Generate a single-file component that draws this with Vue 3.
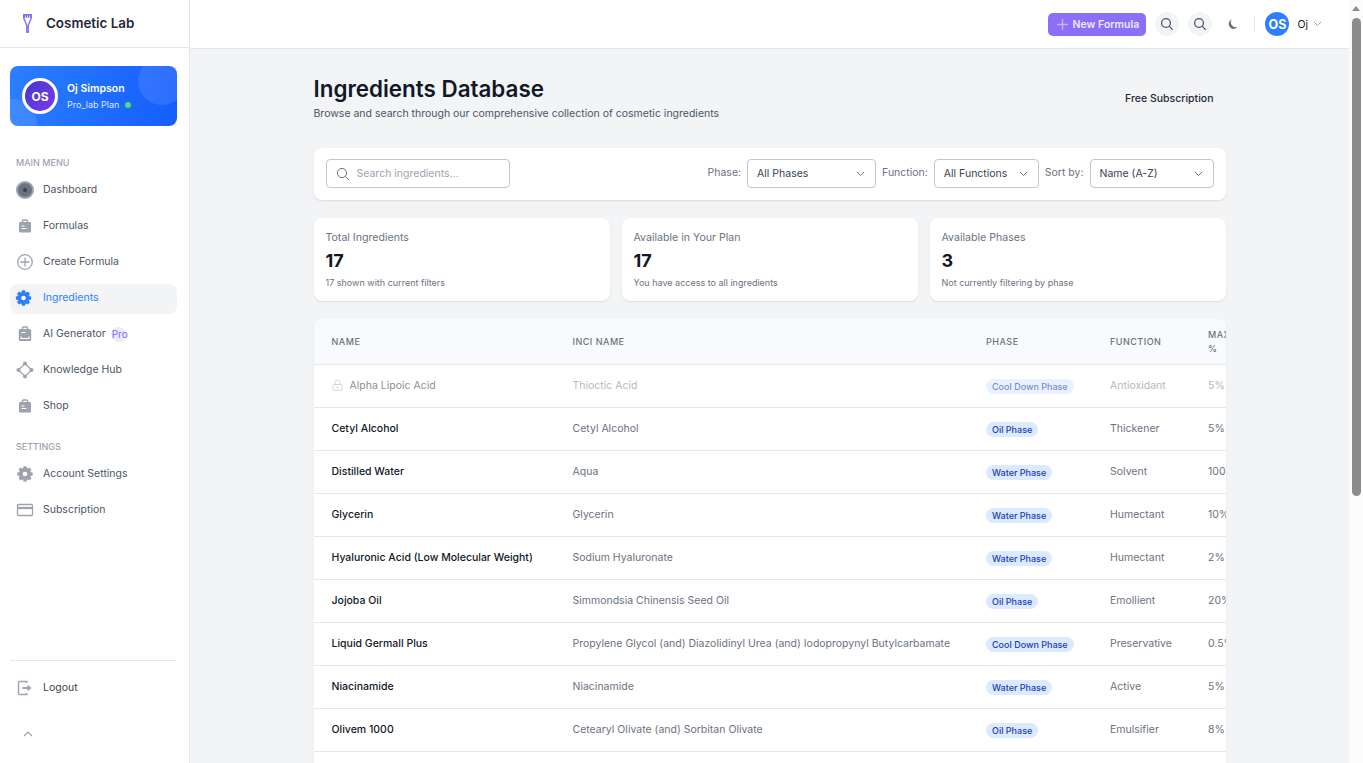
<template>
  <div class="shell">
    <aside class="sidebar">
      <div class="brand">
        <svg class="brand-icon" width="9" height="19" viewBox="0 0 9 19">
          <path d="M.7.7h7.6v3.2L5.200 11.500V18.300H3.800V11.500L.7 3.900z" fill="none" stroke="#7c6cf0" stroke-width="1.300" stroke-linejoin="round" />
          <path d="M.5.500h8v3.300h-8z" fill="#7c6cf0" />
          <path d="M2.500 1.500v2.300M4.500 1.500v2.300M6.500 1.500v2.300" stroke="#fff" stroke-width="0.700" />
        </svg>
        <span>Cosmetic Lab</span>
      </div>

      <div class="profile">
        <i class="blob blob-top"></i>
        <i class="blob blob-bottom"></i>
        <div class="profile-avatar">OS</div>
        <div class="profile-text">
          <div class="profile-name">Oj Simpson</div>
          <div class="profile-plan">Pro_lab Plan <i class="online"></i></div>
        </div>
      </div>

      <div class="section-label first">MAIN MENU</div>
      <nav class="menu">
        <a v-for="item in mainMenu" :key="item.label" class="menu-item" :class="{ active: item.active }">
          <svg class="menu-icon" width="20" height="20" viewBox="0 0 20 20" v-html="icons[item.icon]"></svg>
          <span>{{ item.label }}</span>
          <b v-if="item.pro" class="pro">Pro</b>
        </a>
      </nav>

      <div class="section-label">SETTINGS</div>
      <nav class="menu">
        <a v-for="item in settingsMenu" :key="item.label" class="menu-item">
          <svg class="menu-icon" width="20" height="20" viewBox="0 0 20 20" v-html="icons[item.icon]"></svg>
          <span>{{ item.label }}</span>
        </a>
      </nav>

      <div class="sidebar-foot">
        <a class="menu-item">
          <svg class="menu-icon" width="20" height="20" viewBox="0 0 20 20" v-html="icons.logout"></svg>
          <span class="logout">Logout</span>
        </a>
        <svg class="collapse" width="12" height="8" viewBox="0 0 12 8">
          <path d="M2 6l4-4 4 4" fill="none" stroke="#9ca3af" stroke-width="1.200" />
        </svg>
      </div>
    </aside>

    <div class="main">
      <header class="topbar">
        <button class="new-btn">
          <svg width="13" height="13" viewBox="0 0 13 13">
            <path d="M6.500 1v11M1 6.500h11" stroke="#c4b5fd" stroke-width="1.400" />
          </svg>
          New Formula
        </button>
        <button class="round-btn">
          <svg width="14" height="14" viewBox="0 0 14 14"><circle cx="6" cy="6" r="4.400" fill="none" stroke="#4b5563" stroke-width="1.300" /><path d="M9.400 9.400L12.600 12.600" stroke="#4b5563" stroke-width="1.300" /></svg>
        </button>
        <button class="round-btn">
          <svg width="14" height="14" viewBox="0 0 14 14"><circle cx="6" cy="6" r="4.400" fill="none" stroke="#4b5563" stroke-width="1.300" /><path d="M9.400 9.400L12.600 12.600" stroke="#4b5563" stroke-width="1.300" /></svg>
        </button>
        <svg class="moon" width="12" height="12" viewBox="0 0 12 12">
          <path d="M5 1.200a4.900 4.900 0 0 0 5.800 7.600A5 5 0 1 1 5 1.200z" fill="#6b7280" />
        </svg>
        <i class="top-divider"></i>
        <div class="top-avatar">OS</div>
        <span class="top-name">Oj</span>
        <svg class="top-chevron" width="9" height="6" viewBox="0 0 9 6"><path d="M1 1l3.500 3.500L8 1" fill="none" stroke="#9ca3af" stroke-width="1" /></svg>
      </header>

      <main class="content">
        <div class="page-head">
          <div>
            <h1>Ingredients Database</h1>
            <p>Browse and search through our comprehensive collection of cosmetic ingredients</p>
          </div>
          <div class="plan-note">Free Subscription</div>
        </div>

        <section class="filters">
          <div class="search">
            <svg width="14" height="14" viewBox="0 0 14 14"><circle cx="6" cy="6" r="4.600" fill="none" stroke="#6b7280" stroke-width="1" /><path d="M9.400 9.400L13 13" stroke="#6b7280" stroke-width="1" /></svg>
            <span>Search ingredients...</span>
          </div>
          <div class="selects">
            <template v-for="f in filters" :key="f.label">
              <label>{{ f.label }}</label>
              <div class="select" :style="{ width: f.width + 'px' }">
                <span>{{ f.value }}</span>
                <svg width="9" height="6" viewBox="0 0 9 6"><path d="M1 1l3.500 3.500L8 1" fill="none" stroke="#6b7280" stroke-width="1" /></svg>
              </div>
            </template>
          </div>
        </section>

        <section class="stats">
          <div v-for="s in stats" :key="s.title" class="stat">
            <div class="stat-title">{{ s.title }}</div>
            <div class="stat-value">{{ s.value }}</div>
            <div class="stat-note">{{ s.note }}</div>
          </div>
        </section>

        <section class="table-card">
          <table>
            <colgroup>
              <col style="width: 241px" />
              <col style="width: 413.5px" />
              <col style="width: 124px" />
              <col style="width: 98px" />
              <col style="width: 59.5px" />
            </colgroup>
            <thead>
              <tr>
                <th>NAME</th>
                <th>INCI NAME</th>
                <th>PHASE</th>
                <th>FUNCTION</th>
                <th>MAX<br />%</th>
              </tr>
            </thead>
            <tbody>
              <tr v-for="r in rows" :key="r.name" :class="{ locked: r.locked }">
                <td class="name">
                  <svg v-if="r.locked" class="lock" width="11" height="12" viewBox="0 0 11 12">
                    <path d="M3 5.500V3.600a2.500 2.500 0 0 1 5 0v1.900" fill="none" stroke="#d1d5db" stroke-width="1" />
                    <rect x="1" y="5.500" width="9" height="5.800" rx="1" fill="none" stroke="#d1d5db" stroke-width="1" />
                    <circle cx="5.500" cy="8.400" r="0.900" fill="#d1d5db" />
                  </svg>
                  {{ r.name }}
                </td>
                <td class="muted">{{ r.inci }}</td>
                <td><span class="phase">{{ r.phase }}</span></td>
                <td class="muted">{{ r.fn }}</td>
                <td class="muted nowrap">{{ r.max }}</td>
              </tr>
              <tr><td colspan="5" class="blank"></td></tr>
            </tbody>
          </table>
        </section>
      </main>
    </div>

    <div class="scrollbar">
      <i class="scroll-arrow"></i>
      <i class="scroll-thumb"></i>
    </div>
  </div>
</template>

<script setup>
// eight-tooth cog outline, so both gear icons share one shape
function gearPath(cx, cy, outer, inner) {
  const pts = []
  for (let i = 0; i < 8; i++) {
    const a = (i * Math.PI) / 4
    const step = Math.PI / 8
    const list = [
      [a - step * 0.95, inner],
      [a - step * 0.42, outer],
      [a + step * 0.42, outer],
      [a + step * 0.95, inner]
    ]
    for (const [t, r] of list) {
      pts.push((cx + r * Math.cos(t)).toFixed(2) + ' ' + (cy + r * Math.sin(t)).toFixed(2))
    }
  }
  return 'M' + pts.join('L') + 'z'
}

const bag = '<path d="M7.500 6V5a1 1 0 0 1 1-1h3a1 1 0 0 1 1 1v1" fill="none" stroke="#9ca3af" stroke-width="1.400"/><rect x="4" y="6" width="12" height="10.500" rx="1.300" fill="#9ca3af"/><path d="M6.500 10h3M6.500 12.500h5" stroke="#fff" stroke-width="1"/>'

const icons = {
  dashboard: '<circle cx="10" cy="10" r="9" fill="#9ca3af"/><circle cx="10" cy="10" r="7" fill="#6b7280"/><circle cx="10" cy="10" r="2" fill="#374151"/>',
  bag,
  plus: '<circle cx="10" cy="10" r="7.300" fill="none" stroke="#9ca3af" stroke-width="1.300"/><path d="M10 5.500v9M5.500 10h9" stroke="#9ca3af" stroke-width="1.300"/>',
  gearBlue: `<path d="${gearPath(8.5, 10, 7.6, 5.6)}" fill="#2b7fff" stroke="#2b7fff" stroke-width="0.4" stroke-linejoin="round"/><circle cx="8.500" cy="10" r="2.300" fill="#fff"/>`,
  gear: `<path d="${gearPath(10, 10, 7.6, 5.6)}" fill="#9ca3af" stroke="#9ca3af" stroke-width="0.4" stroke-linejoin="round"/><circle cx="10" cy="10" r="2.300" fill="#fff"/>`,
  ai: '<path d="M7.500 5V4a1 1 0 0 1 1-1h3a1 1 0 0 1 1 1v1" fill="none" stroke="#9ca3af" stroke-width="1.400"/><rect x="3.800" y="5" width="12.400" height="12" rx="1.500" fill="#9ca3af"/><path d="M6 12.500v2h8v-2" fill="none" stroke="#fff" stroke-width="1.100"/><path d="M6.500 8.500h4" stroke="#fff" stroke-width="1.100"/>',
  hub: '<path d="M10 3.500L16.500 10 10 16.500 3.500 10z" fill="none" stroke="#9ca3af" stroke-width="1.200"/><circle cx="10" cy="3.500" r="2" fill="#9ca3af"/><circle cx="10" cy="16.500" r="2" fill="#9ca3af"/><circle cx="3.500" cy="10" r="2" fill="#9ca3af"/><circle cx="16.500" cy="10" r="2" fill="#9ca3af"/>',
  card: '<rect x="2.500" y="4.500" width="15" height="11" rx="1" fill="none" stroke="#9ca3af" stroke-width="1.300"/><path d="M2.500 8h15" stroke="#9ca3af" stroke-width="2.200"/>',
  logout: '<path d="M12 5V3.500H4.500a1 1 0 0 0-1 1v11a1 1 0 0 0 1 1H12V15" fill="none" stroke="#9ca3af" stroke-width="1.400"/><path d="M7.500 10h6" stroke="#9ca3af" stroke-width="2"/><path d="M12.500 6.800L16.500 10l-4 3.200z" fill="#9ca3af"/>'
}

const mainMenu = [
  { label: 'Dashboard', icon: 'dashboard' },
  { label: 'Formulas', icon: 'bag' },
  { label: 'Create Formula', icon: 'plus' },
  { label: 'Ingredients', icon: 'gearBlue', active: true },
  { label: 'AI Generator', icon: 'ai', pro: true },
  { label: 'Knowledge Hub', icon: 'hub' },
  { label: 'Shop', icon: 'bag' }
]

const settingsMenu = [
  { label: 'Account Settings', icon: 'gear' },
  { label: 'Subscription', icon: 'card' }
]

const filters = [
  { label: 'Phase:', value: 'All Phases', width: 129 },
  { label: 'Function:', value: 'All Functions', width: 105 },
  { label: 'Sort by:', value: 'Name (A-Z)', width: 124 }
]

const stats = [
  { title: 'Total Ingredients', value: '17', note: '17 shown with current filters' },
  { title: 'Available in Your Plan', value: '17', note: 'You have access to all ingredients' },
  { title: 'Available Phases', value: '3', note: 'Not currently filtering by phase' }
]

const rows = [
  { name: 'Alpha Lipoic Acid', inci: 'Thioctic Acid', phase: 'Cool Down Phase', fn: 'Antioxidant', max: '5%', locked: true },
  { name: 'Cetyl Alcohol', inci: 'Cetyl Alcohol', phase: 'Oil Phase', fn: 'Thickener', max: '5%' },
  { name: 'Distilled Water', inci: 'Aqua', phase: 'Water Phase', fn: 'Solvent', max: '100%' },
  { name: 'Glycerin', inci: 'Glycerin', phase: 'Water Phase', fn: 'Humectant', max: '10%' },
  { name: 'Hyaluronic Acid (Low Molecular Weight)', inci: 'Sodium Hyaluronate', phase: 'Water Phase', fn: 'Humectant', max: '2%' },
  { name: 'Jojoba Oil', inci: 'Simmondsia Chinensis Seed Oil', phase: 'Oil Phase', fn: 'Emollient', max: '20%' },
  { name: 'Liquid Germall Plus', inci: 'Propylene Glycol (and) Diazolidinyl Urea (and) Iodopropynyl Butylcarbamate', phase: 'Cool Down Phase', fn: 'Preservative', max: '0.5%' },
  { name: 'Niacinamide', inci: 'Niacinamide', phase: 'Water Phase', fn: 'Active', max: '5%' },
  { name: 'Olivem 1000', inci: 'Cetearyl Olivate (and) Sorbitan Olivate', phase: 'Oil Phase', fn: 'Emulsifier', max: '8%' }
]
</script>

<style>
html,
body {
  margin: 0;
  height: 100%;
  overflow: hidden;
}
</style>

<style scoped>
.shell {
  display: flex;
  height: 100vh;
  overflow: hidden;
  background: #f3f4f6;
  font-family: Inter, 'Liberation Sans', sans-serif;
  color: #111827;
}

/* sidebar */
.sidebar {
  width: 189px;
  flex: none;
  display: flex;
  flex-direction: column;
  background: #fff;
  border-right: 1px solid #e5e7eb;
}

.brand {
  display: flex;
  align-items: center;
  gap: 14px;
  padding-left: 23px;
  padding-bottom: 1px;
  height: 46px;
  border-bottom: 1px solid #e5e7eb;
  font-size: 13.4px;
  font-weight: 600;
  color: #1f2937;
}

.profile {
  position: relative;
  overflow: hidden;
  margin: 18px 12px 0 10px;
  height: 60px;
  border-radius: 8px;
  background: linear-gradient(100deg, #2b7fff, #155dfc);
  display: flex;
  align-items: center;
  gap: 9px;
  padding-left: 12px;
  color: #fff;
}

.blob {
  position: absolute;
  border-radius: 50%;
  background: rgba(255, 255, 255, 0.1);
}

.blob-top {
  width: 48px;
  height: 48px;
  right: -9px;
  top: -9px;
}

.blob-bottom {
  width: 48px;
  height: 48px;
  left: -21px;
  bottom: -21px;
}

.profile-avatar {
  width: 30px;
  height: 30px;
  border: 3px solid #fff;
  border-radius: 50%;
  background: linear-gradient(135deg, #4338ca, #7c3aed);
  display: flex;
  align-items: center;
  justify-content: center;
  font-size: 12px;
  font-weight: 700;
  position: relative;
}

.profile-text {
  position: relative;
}

.profile-name {
  font-size: 10.5px;
  font-weight: 600;
  margin-bottom: 4px;
}

.profile-plan {
  font-size: 9px;
  color: #dbeafe;
  display: flex;
  align-items: center;
  gap: 6px;
}

.online {
  width: 6px;
  height: 6px;
  border-radius: 50%;
  background: #4ade80;
}

.section-label {
  margin: 18px 0 0 16px;
  height: 14px;
  line-height: 14px;
  font-size: 9px;
  font-weight: 500;
  color: #9ca3af;
}

.section-label.first {
  margin-top: 30px;
}

.menu {
  display: flex;
  flex-direction: column;
  gap: 6px;
  margin-top: 6px;
}

.menu-item {
  display: flex;
  align-items: center;
  box-sizing: border-box;
  height: 30px;
  margin: 0 12px 0 10px;
  padding: 0 0 4px 5px;
  border-radius: 8px;
  font-size: 10.5px;
  color: #4b5563;
}

.menu-item.active {
  background: #f3f4f6;
  color: #2b7fff;
}

.menu-icon {
  flex: none;
  margin: 2px 8px 0 0;
}

.pro {
  margin-left: 5px;
  width: 15px;
  height: 15px;
  line-height: 15px;
  border-radius: 50%;
  background: #ede9fe;
  color: #7c6cf0;
  font-size: 10px;
  font-weight: 400;
  white-space: nowrap;
  padding-left: 1px;
  box-sizing: border-box;
  position: relative;
  top: 1px;
}

.sidebar-foot {
  margin: auto 12px 0 10px;
  border-top: 1px solid #e5e7eb;
  padding-top: 13px;
  height: 89px;
}

.sidebar-foot .menu-item {
  margin: 0;
}

.logout {
  color: #374151;
}

.collapse {
  display: block;
  margin: 26px 0 0 12px;
}

/* top bar */
.main {
  flex: 1;
  min-width: 0;
  display: flex;
  flex-direction: column;
}

.topbar {
  height: 48px;
  flex: none;
  display: flex;
  align-items: center;
  justify-content: flex-end;
  background: #fff;
  border-bottom: 1px solid #e5e7eb;
  padding-right: 27px;
}

.new-btn {
  width: 98px;
  height: 23px;
  display: flex;
  align-items: center;
  justify-content: center;
  gap: 4px;
  border: 0;
  padding: 0;
  border-radius: 5px;
  background: #8b6ff8;
  color: #ede9fe;
  font: 600 10.5px Inter, sans-serif;
  margin-right: 9px;
}

.round-btn {
  width: 24px;
  height: 24px;
  display: flex;
  align-items: center;
  justify-content: center;
  border: 0;
  padding: 0;
  border-radius: 50%;
  background: #f3f4f6;
  margin-right: 9px;
}

.moon {
  margin-left: 6px;
}

.top-divider {
  width: 1px;
  height: 18px;
  background: #e5e7eb;
  margin: 0 10px 0 15px;
}

.top-avatar {
  width: 24px;
  height: 24px;
  border-radius: 50%;
  background: #2b7fff;
  color: #fff;
  display: flex;
  align-items: center;
  justify-content: center;
  font-size: 12.5px;
  font-weight: 700;
}

.top-name {
  font-size: 10.5px;
  margin: 0 5px 0 8px;
}

/* content */
.content {
  width: 912px;
  margin: 0 auto;
  padding-top: 26px;
}

.page-head {
  display: flex;
  justify-content: space-between;
  align-items: center;
  padding-right: 12px;
}

h1 {
  margin: 0;
  font-size: 22.4px;
  line-height: 28px;
  font-weight: 600;
  color: #111827;
}

.page-head p {
  margin: 3px 0 0;
  font-size: 10.5px;
  line-height: 15px;
  color: #4b5563;
}

.plan-note {
  font-size: 10.5px;
  font-weight: 500;
  color: #1f2937;
}

.filters {
  box-sizing: border-box;
  margin-top: 27px;
  height: 52px;
  display: flex;
  align-items: flex-start;
  justify-content: space-between;
  padding: 11px 12px 0;
  background: #fff;
  border-radius: 8px;
  box-shadow: 0 1px 2px rgba(0, 0, 0, 0.1);
}

.search {
  box-sizing: border-box;
  width: 184px;
  height: 29px;
  display: flex;
  align-items: center;
  gap: 7px;
  padding-left: 9px;
  border: 1px solid #c5c5d0;
  border-radius: 4px;
  font-size: 10.5px;
  color: #9ca3af;
}

.selects {
  display: flex;
  align-items: center;
  font-size: 10.5px;
}

.selects label {
  color: #6b7280;
  margin-right: 6px;
  margin-bottom: 2px;
}

.select {
  box-sizing: border-box;
  height: 29px;
  display: flex;
  align-items: center;
  justify-content: space-between;
  padding: 0 10px 0 9px;
  margin-right: 6px;
  border: 1px solid #c5c5d0;
  border-radius: 4px;
  color: #374151;
}

.select:last-child {
  margin-right: 0;
}

.stats {
  margin-top: 18px;
  display: grid;
  grid-template-columns: repeat(3, 1fr);
  gap: 12px;
}

.stat {
  height: 83px;
  box-sizing: border-box;
  padding: 13px 12px 0;
  background: #fff;
  border-radius: 8px;
  box-shadow: 0 1px 2px rgba(0, 0, 0, 0.1);
}

.stat-title {
  font-size: 10.6px;
  line-height: 14px;
  color: #6b7280;
}

.stat-value {
  margin-top: 5px;
  font-size: 18px;
  line-height: 22px;
  font-weight: 700;
  color: #111827;
}

.stat-note {
  margin-top: 5px;
  font-size: 9px;
  line-height: 12px;
  color: #6b7280;
}

.table-card {
  margin-top: 18px;
  background: #fff;
  border-radius: 8px 8px 0 0;
  overflow: hidden;
  box-shadow: 0 1px 2px rgba(0, 0, 0, 0.1);
}

table {
  width: 936px;
  table-layout: fixed;
  border-collapse: collapse;
}

th {
  height: 45px;
  padding: 0 0 0 18px;
  text-align: left;
  vertical-align: middle;
  background: #f9fafb;
  border-bottom: 1px solid #e5e7eb;
  font-size: 9px;
  line-height: 14px;
  font-weight: 500;
  letter-spacing: 0.5px;
  color: #6b7280;
}

td {
  box-sizing: border-box;
  height: 43px;
  padding: 0 0 2px 18px;
  border-bottom: 1px solid #e5e7eb;
  font-size: 10.5px;
  color: #111827;
  white-space: nowrap;
  overflow: hidden;
}

td.name {
  font-weight: 500;
}

td.muted {
  color: #6b7280;
}

.blank {
  border-bottom: 0;
}

.phase {
  display: inline-block;
  position: relative;
  top: 1px;
  padding: 0 6px;
  height: 15px;
  line-height: 15px;
  border-radius: 8px;
  background: #dbeafe;
  color: #193cb8;
  font-size: 9px;
  font-weight: 500;
}

tr.locked td {
  color: #b4b8c0;
}

tr.locked td.name {
  color: #8b8f98;
  font-weight: 400;
}

tr.locked .phase {
  opacity: 0.6;
}

.lock {
  vertical-align: -2px;
  margin-right: 4px;
}

/* fake classic scrollbar of the reference */
.scrollbar {
  width: 14px;
  flex: none;
  position: relative;
  background: #fbfbfb;
}

.scroll-arrow {
  position: absolute;
  left: 3px;
  top: 6px;
  border-left: 4.5px solid transparent;
  border-right: 4.5px solid transparent;
  border-bottom: 5px solid #8c8c8c;
}

.scroll-thumb {
  position: absolute;
  left: 3px;
  top: 18px;
  width: 9px;
  height: 478px;
  border-radius: 4.5px;
  background: #8c8c8c;
}
</style>
